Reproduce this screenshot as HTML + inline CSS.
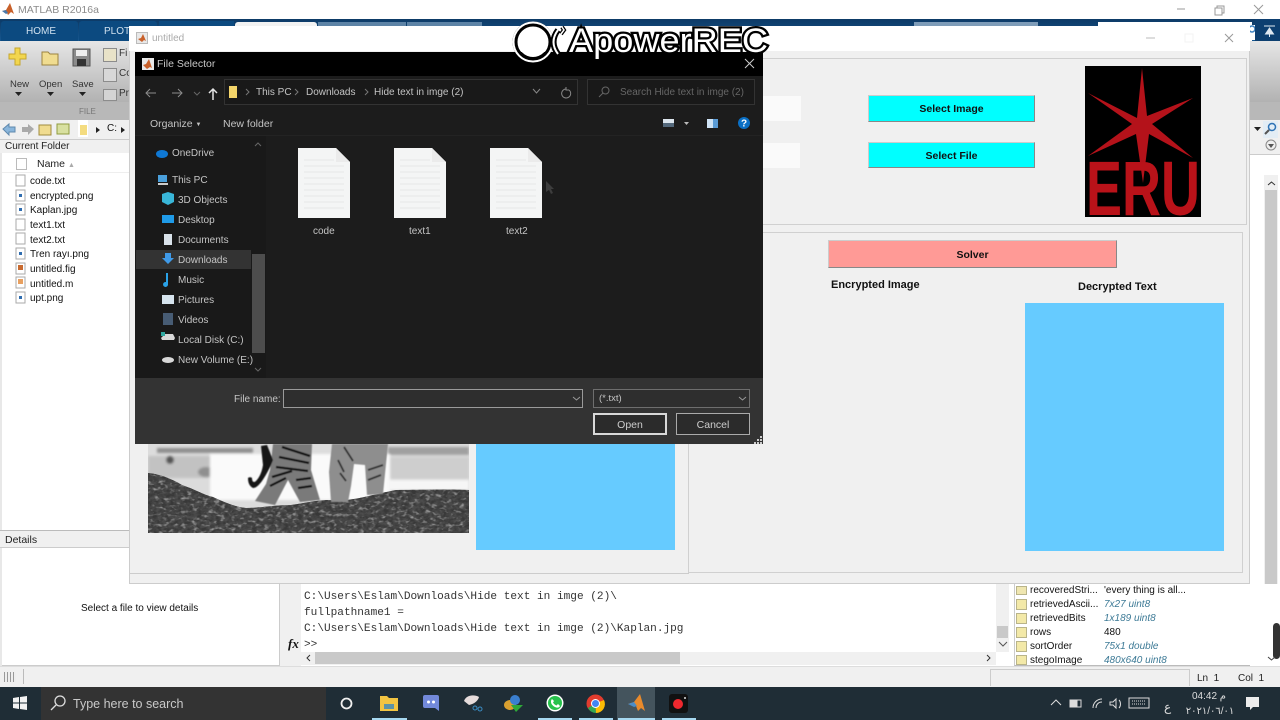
<!DOCTYPE html>
<html><head><meta charset="utf-8"><style>
html,body{margin:0;padding:0;width:1280px;height:720px;overflow:hidden;background:#fff}
body{position:relative;font-family:"Liberation Sans","Noto Sans CJK SC",sans-serif;font-size:10px;color:#111}
.a{position:absolute}
.t{position:absolute;white-space:nowrap;line-height:18px;margin-top:1px}
.n{color:#c4c4c4;font-size:10px}
.nv{margin-top:1px}
.mono{position:absolute;font-family:"Liberation Mono",monospace;font-size:11.1px;color:#333;white-space:nowrap;line-height:18px;left:304px;margin-top:1px}
svg{position:absolute;overflow:visible}
.btn{position:absolute;background:#0ff;border-bottom:1px solid #888;border-right:1px solid #888;border-top:1px solid #ccc;border-left:1px solid #ccc;box-sizing:border-box;text-align:center;font-weight:bold;font-size:10.5px;color:#111}
.wv{position:absolute;left:1030px;font-size:10px;color:#111;white-space:nowrap;line-height:16px}
.wt{position:absolute;left:1104px;font-size:10px;color:#3d7a96;font-style:italic;white-space:nowrap;line-height:16px}
.gi{position:absolute;left:1016px;width:11px;height:11px;background:#f3e9a8;border:1px solid #b9b48a;box-sizing:border-box}
</style></head><body>

<!-- MATLAB title bar -->
<div class="a" style="left:0;top:0;width:1280px;height:19px;background:#fff"></div>
<svg style="left:2px;top:3px" width="13" height="13" viewBox="0 0 13 13"><path d="M0 8l4-1 4-7 4 11-3-2-3 3-2-4z" fill="#c8602a"/><path d="M0 8l4-1 2 3-2 1z" fill="#4a78a8"/></svg>
<div class="t" style="left:18px;top:0px;color:#8c8c8c;font-size:10.5px">MATLAB R2016a</div>
<svg style="left:1175px;top:4px" width="100" height="12" viewBox="0 0 100 12" fill="none" stroke="#999"><path d="M2 5h8"/><path d="M40 4h7v7h-7zM42 4V2h7v7h-2"/><path d="M79 1l9 9M88 1l-9 9"/></svg>

<!-- Blue tab strip -->
<div class="a" style="left:0;top:19px;width:1280px;height:22px;background:linear-gradient(#0d3a66,#15568f)"></div>
<div class="a" style="left:1px;top:21px;width:77px;height:20px;background:#0c4a80;border-radius:3px 3px 0 0"></div>
<div class="t" style="left:26px;top:22px;color:#cfe0ee;font-size:10px">HOME</div>
<div class="a" style="left:79px;top:21px;width:78px;height:20px;background:#0c4a80;border-radius:3px 3px 0 0"></div>
<div class="t" style="left:104px;top:22px;color:#cfe0ee;font-size:10px">PLOTS</div>
<div class="a" style="left:159px;top:21px;width:75px;height:20px;background:#0c4a80"></div>
<div class="a" style="left:235px;top:22px;width:82px;height:19px;background:#f2f2f2;border-radius:3px 3px 0 0"></div>
<div class="a" style="left:318px;top:22px;width:88px;height:19px;background:#5d83a6"></div>
<div class="a" style="left:407px;top:22px;width:75px;height:19px;background:#5d83a6"></div>
<div class="a" style="left:914px;top:22px;width:124px;height:19px;background:#7e9cb8"></div>
<div class="a" style="left:1098px;top:22px;width:154px;height:19px;background:#fff"></div>
<svg style="left:1250px;top:25px" width="30" height="16" viewBox="0 0 30 16"><rect x="0" y="0" width="5" height="15" fill="#fff"/><circle cx="2" cy="4" r="3" fill="none" stroke="#3a80c0" stroke-width="1.5"/><rect x="5" y="-6" width="25" height="22" fill="#0d3f70"/><path d="M14 1h11M19.500 3l-4 6h8zM19.500 9v3" fill="#dfe8f0" stroke="#dfe8f0"/></svg>

<!-- Ribbon -->
<div class="a" style="left:0;top:41px;width:1280px;height:61px;background:linear-gradient(#e6e6e6,#b2b2b2)"></div>
<div class="a" style="left:0;top:102px;width:1280px;height:18px;background:#b8b8b8"></div>
<svg style="left:8px;top:47px" width="20" height="20" viewBox="0 0 20 20"><path d="M7 1h5v6h6v5h-6v6H7v-6H1V7h6z" fill="#f2d64f" stroke="#c5a62d"/></svg>
<svg style="left:41px;top:51px" width="18" height="15" viewBox="0 0 18 15"><path d="M1 1h6l2 2h8v11H1z" fill="#f0dc90" stroke="#9c8340"/></svg>
<svg style="left:72px;top:48px" width="20" height="19" viewBox="0 0 20 19"><rect x="1" y="1" width="17" height="17" fill="#8b8b8b" stroke="#555"/><rect x="4" y="2" width="11" height="6" fill="#eee"/><rect x="5" y="11" width="9" height="7" fill="#333"/></svg>
<div class="t" style="left:10px;top:75px;font-size:9.5px;color:#333">New</div>
<div class="t" style="left:39px;top:75px;font-size:9.5px;color:#333">Open</div>
<div class="t" style="left:72px;top:75px;font-size:9.5px;color:#333">Save</div>
<svg style="left:14px;top:92px" width="80" height="5" viewBox="0 0 80 5" fill="#222"><path d="M1 0h7l-3.500 4zM33 0h7l-3.500 4zM65 0h7l-3.500 4z"/></svg>
<div class="t" style="left:79px;top:102px;font-size:8px;color:#777">FILE</div>
<div class="a" style="left:103px;top:48px;width:12px;height:12px;background:#e8e2c8;border:1px solid #8c8c8c"></div>
<div class="a" style="left:103px;top:68px;width:12px;height:12px;background:#d8d8d8;border:1px solid #8c8c8c"></div>
<div class="a" style="left:103px;top:89px;width:12px;height:10px;background:#d4d4d4;border:1px solid #8c8c8c"></div>
<div class="t" style="left:119px;top:44px;color:#333">Fi</div>
<div class="t" style="left:119px;top:64px;color:#333">Co</div>
<div class="t" style="left:119px;top:84px;color:#333">Pr</div>

<!-- Path bar -->
<div class="a" style="left:0;top:120px;width:129px;height:19px;background:#f0f0f0"></div>
<svg style="left:2px;top:122px" width="124" height="15" viewBox="0 0 124 15"><path d="M1 7l6-5v3h6v5H7v3z" fill="#8ab6dc" stroke="#5f89ad"/><path d="M32 7l-6-5v3h-6v5h6v3z" fill="#aaa"/><rect x="37" y="3" width="12" height="10" fill="#f0dc90" stroke="#a08c40"/><rect x="55" y="2" width="12" height="10" fill="#d8e0a0" stroke="#909c40"/><rect x="76" y="-2" width="10" height="17" fill="#fff"/><rect x="78" y="3" width="7" height="10" fill="#f4dc80"/><path d="M94 5l4 3-4 3zM119 5l4 3-4 3z" fill="#222"/></svg>
<div class="t" style="left:107px;top:119px;font-size:10px">C:</div>
<div class="a" style="left:0;top:139px;width:129px;height:14px;background:#f0f0f0;border-top:1px solid #ccc"></div>
<div class="t" style="left:5px;top:137px;font-size:10px;color:#222">Current Folder</div>

<!-- Current folder -->
<div class="a" style="left:2px;top:153px;width:127px;height:377px;background:#fff"></div>
<div class="a" style="left:0;top:153px;width:2px;height:530px;background:#e8e8e8"></div>
<div class="a" style="left:16px;top:158px;width:9px;height:10px;border:1px solid #bbb;background:#fff"></div>
<div class="t" style="left:37px;top:154px;font-size:10.5px;color:#222">Name <span style="color:#aaa;font-size:7px">▲</span></div>
<div class="a" style="left:2px;top:172px;width:127px;height:1px;background:#eee"></div>
<div class="t" style="left:30px;top:172px;font-size:10px">code.txt</div>
<div class="t" style="left:30px;top:187px;font-size:10px">encrypted.png</div>
<div class="t" style="left:30px;top:201px;font-size:10px">Kaplan.jpg</div>
<div class="t" style="left:30px;top:216px;font-size:10px">text1.txt</div>
<div class="t" style="left:30px;top:231px;font-size:10px">text2.txt</div>
<div class="t" style="left:30px;top:245px;font-size:10px">Tren rayı.png</div>
<div class="t" style="left:30px;top:260px;font-size:10px">untitled.fig</div>
<div class="t" style="left:30px;top:275px;font-size:10px">untitled.m</div>
<div class="t" style="left:30px;top:289px;font-size:10px">upt.png</div>
<svg style="left:15px;top:175px" width="12" height="130" viewBox="0 0 12 130">
<g fill="#fff" stroke="#aaa"><rect x="1" y="0" width="9" height="11"/><rect x="1" y="15" width="9" height="11"/><rect x="1" y="29" width="9" height="11"/><rect x="1" y="44" width="9" height="11"/><rect x="1" y="58" width="9" height="11"/><rect x="1" y="73" width="9" height="11"/><rect x="1" y="88" width="9" height="11"/><rect x="1" y="102" width="9" height="11"/><rect x="1" y="117" width="9" height="11"/></g>
<g fill="#2f6db0"><rect x="4" y="19" width="3" height="3"/><rect x="4" y="33" width="3" height="3"/><rect x="4" y="77" width="3" height="3"/><rect x="4" y="121" width="3" height="3"/></g>
<rect x="3" y="90" width="5" height="5" fill="#c86a30"/><rect x="3" y="104" width="5" height="5" fill="#e8a060"/></svg>

<!-- Details -->
<div class="a" style="left:0;top:530px;width:129px;height:1px;background:#bbb"></div>
<div class="a" style="left:0;top:531px;width:129px;height:16px;background:#f0f0f0;border-bottom:1px solid #ccc"></div>
<div class="t" style="left:5px;top:530px;font-size:10.5px;color:#222">Details</div>
<div class="a" style="left:2px;top:548px;width:277px;height:117px;background:#fff;border-right:1px solid #ccc;border-bottom:1px solid #ccc"></div>
<div class="t" style="left:81px;top:599px;font-size:10px;color:#111">Select a file to view details</div>

<!-- Bottom gray band -->
<div class="a" style="left:0;top:666px;width:1280px;height:20px;background:#f0f0f0;border-top:1px solid #ddd"></div>
<div class="a" style="left:280px;top:584px;width:8px;height:82px;background:#f0f0f0"></div>
<div class="a" style="left:4px;top:672px;width:12px;height:10px;background:repeating-linear-gradient(90deg,#999 0 1px,#eee 1px 3px)"></div>
<div class="a" style="left:23px;top:669px;width:1px;height:15px;background:#bbb"></div>
<div class="a" style="left:990px;top:669px;width:200px;height:17px;border:1px solid #ccc;box-sizing:border-box;border-bottom:0"></div>
<div class="t" style="left:1197px;top:669px;font-size:10px;color:#222">Ln&nbsp; 1</div>
<div class="t" style="left:1238px;top:669px;font-size:10px;color:#222">Col&nbsp; 1</div>

<!-- Command window -->
<div class="a" style="left:287px;top:584px;width:726px;height:82px;background:#fff"></div>
<div class="a" style="left:287px;top:584px;width:14px;height:82px;background:#f0f0f0"></div>
<div class="mono" style="top:587px">C:\Users\Eslam\Downloads\Hide text in imge (2)\</div>
<div class="mono" style="top:603px">fullpathname1 =</div>
<div class="mono" style="top:619px">C:\Users\Eslam\Downloads\Hide text in imge (2)\Kaplan.jpg</div>
<div class="mono" style="top:635px">&gt;&gt;</div>
<div class="t" style="left:288px;top:634px;font-family:'Liberation Serif',serif;font-style:italic;font-weight:bold;font-size:13px">fx</div>
<div class="a" style="left:301px;top:652px;width:695px;height:13px;background:#f0f0f0"></div>
<div class="a" style="left:315px;top:652px;width:365px;height:12px;background:#c9c9c9"></div>
<svg style="left:304px;top:654px" width="690" height="9" viewBox="0 0 690 9" fill="none" stroke="#333"><path d="M6 1L3 4l3 3M683 1l3 3-3 3"/></svg>
<div class="a" style="left:996px;top:584px;width:13px;height:68px;background:#f0f0f0"></div>
<div class="a" style="left:997px;top:626px;width:11px;height:12px;background:#c9c9c9"></div>
<svg style="left:997px;top:640px" width="12" height="8" viewBox="0 0 12 8" fill="none" stroke="#555"><path d="M2 2l4 4 4-4"/></svg>

<!-- Workspace -->
<div class="a" style="left:1014px;top:584px;width:251px;height:82px;background:#fff;border-left:1px solid #ccc;border-bottom:1px solid #bbb;box-sizing:border-box"></div>
<div class="a" style="left:1016px;top:586px;width:11px;height:9px;background:#efe6b0;border:1px solid #b9b48a;box-sizing:border-box"></div>
<div class="gi" style="top:599px"></div><div class="gi" style="top:613px"></div><div class="gi" style="top:627px"></div><div class="gi" style="top:641px"></div><div class="gi" style="top:655px;height:10px"></div>
<div class="wv" style="top:583px">recoveredStri...</div><div class="wv" style="left:1104px;top:583px">'every thing is all...</div>
<div class="wv" style="top:597px">retrievedAscii...</div><div class="wt" style="top:597px">7x27 uint8</div>
<div class="wv" style="top:611px">retrievedBits</div><div class="wt" style="top:611px">1x189 uint8</div>
<div class="wv" style="top:625px">rows</div><div class="wv" style="left:1104px;top:625px">480</div>
<div class="wv" style="top:639px">sortOrder</div><div class="wt" style="top:639px">75x1 double</div>
<div class="wv" style="top:653px;height:12px;overflow:hidden">stegoImage</div><div class="wt" style="top:653px;height:12px;overflow:hidden">480x640 uint8</div>

<!-- Right strip -->
<div class="a" style="left:1250px;top:120px;width:30px;height:20px;background:#f0f0f0"></div>
<svg style="left:1250px;top:120px" width="30" height="20" viewBox="0 0 30 20"><path d="M4 7h7l-3.500 4z" fill="#222"/><rect x="13" y="1" width="15" height="17" fill="#e3edf5"/><circle cx="22" cy="7" r="3.500" fill="none" stroke="#2f73b5" stroke-width="1.500"/><path d="M19 10l-4 4" stroke="#555" stroke-width="2"/></svg>
<div class="a" style="left:1250px;top:140px;width:30px;height:14px;background:#f0f0f0;border-bottom:1px solid #ccc"></div>
<svg style="left:1265px;top:139px" width="12" height="12" viewBox="0 0 12 12"><circle cx="6" cy="6" r="5" fill="#eee" stroke="#888"/><path d="M3 5h6l-3 4z" fill="#555"/></svg>
<div class="a" style="left:1250px;top:155px;width:30px;height:511px;background:#fff"></div>
<div class="a" style="left:1264px;top:175px;width:14px;height:409px;background:#f0f0f0"></div>
<div class="a" style="left:1265px;top:190px;width:12px;height:394px;background:#c9c9c9"></div>
<svg style="left:1266px;top:180px" width="11" height="7" viewBox="0 0 11 7" fill="none" stroke="#333"><path d="M2 5l3.500-3L9 5"/></svg>
<div class="a" style="left:1273px;top:623px;width:7px;height:36px;background:#333;border-radius:4px"></div>
<svg style="left:1266px;top:655px" width="11" height="7" viewBox="0 0 11 7" fill="none" stroke="#444"><path d="M2 2l3.500 3L9 2"/></svg>

<!-- untitled window -->
<div class="a" style="left:129px;top:26px;width:1121px;height:558px;background:#f0f0f0;border-left:1px solid #ccc;border-right:1px solid #ccc;border-bottom:1px solid #ccc;box-sizing:border-box"></div>
<div class="a" style="left:129px;top:26px;width:1121px;height:25px;background:#fff"></div>
<div class="a" style="left:136px;top:32px;width:12px;height:12px;background:#e8e8e8;border:1px solid #bbb;box-sizing:border-box"></div>
<svg style="left:138px;top:34px" width="8" height="8" viewBox="0 0 8 8"><path d="M0 5l3-1 2-4 3 7-2-1-2 2z" fill="#c8602a"/></svg>
<div class="t" style="left:152px;top:29px;font-size:10px;color:#aaa">untitled</div>
<svg style="left:1146px;top:33px" width="90" height="12" viewBox="0 0 90 12" fill="none"><path d="M0 5h9" stroke="#bbb"/><rect x="39" y="1" width="8" height="8" stroke="#f3f3f3"/><path d="M79 1l8 8M87 1l-8 8" stroke="#999"/></svg>

<!-- top panel -->
<div class="a" style="left:763px;top:58px;width:484px;height:167px;border:1px solid #d0d0d0;border-left:0;box-sizing:border-box;background:#f0f0f0"></div>
<div class="a" style="left:763px;top:96px;width:38px;height:25px;background:#fafafa"></div>
<div class="a" style="left:763px;top:143px;width:37px;height:25px;background:#fafafa"></div>
<div class="btn" style="left:868px;top:95px;width:167px;height:27px;line-height:26px">Select Image</div>
<div class="btn" style="left:868px;top:142px;width:167px;height:26px;line-height:26px">Select File</div>

<!-- ERU logo -->
<svg style="left:1085px;top:66px" width="116" height="151" viewBox="0 0 116 151">
<rect width="116" height="151" fill="#000"/>
<path d="M57 2L62 50L108 32L67 58L108 92L64 68L58 117L51 68L3 90L47 58L3 27L52 52Z" fill="#b4121a"/>
<text x="1" y="149" textLength="114" lengthAdjust="spacingAndGlyphs" font-family="Liberation Sans,sans-serif" font-weight="bold" font-size="77" fill="#b91219">ERU</text>
</svg>

<!-- lower panels -->
<div class="a" style="left:688px;top:232px;width:555px;height:341px;border:1px solid #d0d0d0;box-sizing:border-box;background:#f0f0f0"></div>
<div class="a" style="left:129px;top:573px;width:560px;height:1px;background:#ccc"></div>
<div class="btn" style="left:828px;top:240px;width:289px;height:28px;line-height:28px;background:#ff9a96">Solver</div>
<div class="t" style="left:831px;top:275px;font-weight:bold;font-size:11px;color:#111">Encrypted Image</div>
<div class="t" style="left:1078px;top:277px;font-weight:bold;font-size:11px;color:#111">Decrypted Text</div>
<div class="a" style="left:1025px;top:303px;width:199px;height:248px;background:#66cbff"></div>
<div class="a" style="left:476px;top:440px;width:199px;height:110px;background:#66cbff"></div>

<!-- tiger image -->
<svg style="left:148px;top:444px;overflow:hidden" width="321" height="89" viewBox="0 0 321 89">
<defs>
<filter id="b1" x="-5%" y="-5%" width="110%" height="110%"><feGaussianBlur stdDeviation="1.200"/></filter>
<filter id="b2" x="-5%" y="-5%" width="110%" height="110%"><feGaussianBlur stdDeviation=".5"/></filter>
<filter id="nz" x="0" y="0" width="100%" height="100%"><feTurbulence type="fractalNoise" baseFrequency="0.22 0.32" numOctaves="2" seed="4"/><feColorMatrix values="0 0 0 0 0.04  0 0 0 0 0.04  0 0 0 0 0.04  2.4 0 0 0 -0.7"/></filter>
<filter id="nw" x="0" y="0" width="100%" height="100%"><feTurbulence type="fractalNoise" baseFrequency="0.18 0.3" numOctaves="2" seed="9"/><feColorMatrix values="0 0 0 0 .72  0 0 0 0 .72  0 0 0 0 .72  1.8 0 0 0 -.95"/></filter>
<clipPath id="gc"><path d="M0 29c12 1 24 6 34 12 12 4 22 10 31 12 11 5 22 10 33 11 14 0 28-3 45-3 14-2 27-5 39-5 20 2 36-4 66-10 24 0 48-1 73 0v43H0z"/></clipPath>
</defs>
<rect width="321" height="89" fill="#dcdcdc"/>
<g filter="url(#b1)">
<rect x="9" y="4" width="96" height="5" fill="#8f8f8f"/><rect x="240" y="3" width="81" height="8" fill="#a0a0a0"/>
<rect x="0" y="12" width="62" height="22" fill="#c2c2c2"/><circle cx="22" cy="16" r="4" fill="#555"/><ellipse cx="58" cy="28" rx="8" ry="5" fill="#8f8f8f"/>
<rect x="240" y="13" width="81" height="22" fill="#cecece"/>
<rect x="62" y="10" width="180" height="46" fill="#fafafa"/>
<rect x="240" y="36" width="81" height="10" fill="#f6f6f6"/>
</g>
<g clip-path="url(#gc)"><rect width="321" height="89" fill="#4c4c4c"/><rect width="321" height="89" filter="url(#nz)"/><rect width="321" height="89" filter="url(#nw)"/></g>
<g filter="url(#b2)">
<path d="M125 0h39l-1 26 9 30-20 2-12-22-13 25-20-4 11-17 4-14z" fill="#7a7a7a"/>
<path d="M184 0h56l-3 30-2 20-16 1-2-30-11-1-3 22-3 16-17 0-2-30z" fill="#8e8e8e"/>
<path d="M119 1l6 15c-3 8-7 15-11 21-3 4-6 7-9 7-4-2-5-6-5-10 1-1 3-1 4 0 0 4 2 5 4 3 4-4 6-10 7-16l-2-19z" fill="#151515"/>
<g fill="none" stroke="#0f0f0f" stroke-width="2.300"><path d="M134 3l28 9M131 13l30 6M128 23l32 4M124 33l20-6M122 42l16-8M148 36l15-2M150 44l14-2"/></g>
<g fill="none" stroke="#2a2a2a" stroke-width="1.800"><path d="M196 3l9 14M190 16l6 12M192 29l6 8M220 26l15-5M220 36l13-5"/></g>
</g>
</svg>

<!-- File Selector dialog -->
<div class="a" style="left:135px;top:52px;width:628px;height:392px;background:#1c1c1c"></div>
<div class="a" style="left:135px;top:52px;width:628px;height:24px;background:#000"></div>
<div class="a" style="left:142px;top:58px;width:12px;height:12px;background:#e8e8e8"></div>
<svg style="left:143px;top:59px" width="10" height="10" viewBox="0 0 10 10"><path d="M0 6l3-1 3-5 3 9-2-1-3 2z" fill="#c8602a"/></svg>
<div class="t" style="left:157px;top:54px;font-size:10.5px;color:#c8c8c8">File Selector</div>
<svg style="left:745px;top:59px" width="9" height="9" viewBox="0 0 9 9" stroke="#ccc"><path d="M0 0l9 9M9 0L0 9"/></svg>

<svg style="left:146px;top:87px" width="76" height="14" viewBox="0 0 76 14" fill="none"><path d="M0 6h10M4 2L0 6l4 4M26 6h10M32 2l4 4-4 4" stroke="#8c8c8c"/><path d="M48 5l3 3 3-3" stroke="#666"/><path d="M67 13V3M63 6l4-4 4 4" stroke="#e4e4e4" stroke-width="1.500"/></svg>
<div class="a" style="left:224px;top:79px;width:354px;height:26px;border:1px solid #333;box-sizing:border-box;background:#191919"></div>
<svg style="left:228px;top:86px" width="10" height="12" viewBox="0 0 10 12"><path d="M1 0h8v12H1z" fill="#f4d56a"/></svg>
<div class="t n" style="left:256px;top:83px">This PC</div>
<div class="t n" style="left:306px;top:83px">Downloads</div>
<div class="t n" style="left:374px;top:83px">Hide text in imge (2)</div>
<svg style="left:245px;top:88px" width="125" height="8" viewBox="0 0 125 8" fill="none" stroke="#777"><path d="M1 1l3 3-3 3M50 1l3 3-3 3M120 1l3 3-3 3"/></svg>
<svg style="left:532px;top:87px" width="40" height="12" viewBox="0 0 40 12" fill="none" stroke="#888"><path d="M1 2l3.500 4L8 2"/><path d="M37 3a4.500 4.500 0 1 1-3-1M34 0v3h3"/></svg>
<div class="a" style="left:587px;top:79px;width:168px;height:26px;border:1px solid #333;box-sizing:border-box;background:#191919"></div>
<svg style="left:598px;top:86px" width="12" height="12" viewBox="0 0 12 12" fill="none" stroke="#666"><circle cx="7.500" cy="4.500" r="3.500"/><path d="M5 7L1 11"/></svg>
<div class="t" style="left:620px;top:83px;font-size:10px;color:#666">Search Hide text in imge (2)</div>

<div class="t n" style="left:150px;top:114px;font-size:10.500px">Organize <span style="font-size:6px;vertical-align:1px">▼</span></div>
<div class="t n" style="left:223px;top:114px;font-size:10.500px">New folder</div>
<svg style="left:662px;top:116px" width="90" height="14" viewBox="0 0 90 14"><rect x="1" y="3" width="11" height="8" fill="#dde6ee"/><rect x="1" y="7" width="11" height="4" fill="#54697c"/><path d="M22 6h5l-2.500 3z" fill="#bbb"/><rect x="45" y="3" width="11" height="9" fill="#cfe3f5"/><rect x="51" y="3" width="5" height="9" fill="#5a9bd5"/><circle cx="82" cy="7" r="6" fill="#0a6fc4"/><text x="82" y="10.500" text-anchor="middle" font-family="Liberation Sans,sans-serif" font-size="10" font-weight="bold" fill="#fff">?</text></svg>
<div class="a" style="left:135px;top:135px;width:628px;height:1px;background:#232323"></div>

<!-- Nav pane -->
<div class="a" style="left:135px;top:136px;width:131px;height:242px;background:#191919"></div>
<div class="a" style="left:136px;top:250px;width:115px;height:19px;background:#333"></div>
<div class="a" style="left:252px;top:254px;width:13px;height:99px;background:#4d4d4d"></div>
<svg style="left:253px;top:140px" width="10" height="236" viewBox="0 0 10 236" fill="none" stroke="#666"><path d="M2 6l3-3 3 3M2 228l3 3 3-3"/></svg>
<div class="t n nv" style="left:172px;top:144px">OneDrive</div>
<div class="t n nv" style="left:172px;top:171px">This PC</div>
<div class="t n nv" style="left:178px;top:191px">3D Objects</div>
<div class="t n nv" style="left:178px;top:211px">Desktop</div>
<div class="t n nv" style="left:178px;top:231px">Documents</div>
<div class="t n nv" style="left:178px;top:251px">Downloads</div>
<div class="t n nv" style="left:178px;top:271px">Music</div>
<div class="t n nv" style="left:178px;top:291px">Pictures</div>
<div class="t n nv" style="left:178px;top:311px">Videos</div>
<div class="t n nv" style="left:178px;top:331px">Local Disk (C:)</div>
<div class="t n nv" style="left:178px;top:351px">New Volume (E:)</div>
<svg style="left:155px;top:146px" width="22" height="220" viewBox="0 0 22 220">
<ellipse cx="7" cy="8" rx="6" ry="4" fill="#0f78d4"/>
<rect x="3" y="29" width="9" height="7" fill="#4aa0dc"/><path d="M3 38h10" stroke="#ccc" stroke-width="2"/>
<path d="M7 48l6-2 6 2v8l-6 3-6-3z" fill="#39b6d8"/>
<rect x="7" y="69" width="12" height="8" fill="#1f9be8"/>
<rect x="9" y="88" width="8" height="11" fill="#d9e2ea"/>
<path d="M10 107h6v5h3l-6 6-6-6h3z" fill="#3f9ae8"/>
<path d="M13 127v11a2.500 2.500 0 1 1-2-2v-9h2z" fill="#2aa2e8"/>
<rect x="7" y="149" width="12" height="9" fill="#d6e4ee"/>
<rect x="8" y="167" width="10" height="12" fill="#475c74"/>
<path d="M6 192l4-4h8l2 4-1 2H7z" fill="#d8d8d8"/><rect x="6" y="186" width="4" height="4" fill="#2fa8a0"/>
<ellipse cx="13" cy="214" rx="6" ry="3" fill="#d8d8d8"/>
</svg>

<!-- File icons -->
<svg style="left:298px;top:148px" width="244" height="70" viewBox="0 0 244 70">
<defs>
<g id="f"><path d="M0 0h38l14 14v56H0z" fill="#f4f5f5"/><path d="M38 0l14 14H38z" fill="#ebebeb"/><path d="M6 12h30M6 18h40M6 24h40M6 30h40M6 36h40M6 42h40M6 48h40M6 54h40M6 60h40" stroke="#e6e8e8"/></g>
</defs>
<use href="#f" x="0"/><use href="#f" x="96"/><use href="#f" x="192"/>
</svg>
<div class="t n nv" style="left:313px;top:222px">code</div>
<div class="t n nv" style="left:409px;top:222px">text1</div>
<div class="t n nv" style="left:506px;top:222px">text2</div>
<svg style="left:546px;top:181px" width="9" height="13" viewBox="0 0 9 13"><path d="M0 0l8 8H5l2 4-2 1-2-4-3 2z" fill="#3d3d3d"/></svg>

<!-- Dialog bottom -->
<div class="a" style="left:135px;top:378px;width:628px;height:66px;background:#333"></div>
<div class="t n" style="left:234px;top:390px">File name:</div>
<div class="a" style="left:283px;top:389px;width:300px;height:19px;border:1px solid #9a9a9a;box-sizing:border-box;background:#2e2e2e"></div>
<div class="a" style="left:593px;top:389px;width:157px;height:19px;border:1px solid #6e6e6e;box-sizing:border-box;background:#2e2e2e"></div>
<div class="t n" style="left:599px;top:389px;font-size:9.500px">(*.txt)</div>
<svg style="left:572px;top:396px" width="176" height="6" viewBox="0 0 176 6" fill="none" stroke="#999"><path d="M1 1l3.500 3L8 1M167 1l3.500 3 3.500-3"/></svg>
<div class="a" style="left:593px;top:413px;width:74px;height:22px;border:2px solid #d8d8d8;box-sizing:border-box;background:#2b2b2b;color:#ccc;text-align:center;line-height:20px;font-size:10.500px">Open</div>
<div class="a" style="left:676px;top:413px;width:74px;height:22px;border:1px solid #aaa;box-sizing:border-box;background:#2b2b2b;color:#ccc;text-align:center;line-height:22px;font-size:10.500px">Cancel</div>
<svg style="left:754px;top:436px" width="8" height="8" viewBox="0 0 8 8" fill="#ccc"><rect x="6" y="0" width="2" height="2"/><rect x="3" y="3" width="2" height="2"/><rect x="6" y="3" width="2" height="2"/><rect x="0" y="6" width="2" height="2"/><rect x="3" y="6" width="2" height="2"/><rect x="6" y="6" width="2" height="2"/></svg>

<!-- Watermark -->
<svg style="left:512px;top:22px" width="258" height="42" viewBox="0 0 258 42">
<circle cx="21" cy="20" r="18" fill="none" stroke="#000" stroke-width="5"/><circle cx="21" cy="20" r="19.500" fill="none" stroke="#fff" stroke-width="2"/>
<circle cx="21" cy="20" r="15" fill="#fff"/>
<path d="M46 8c-6 8-6 16 0 24" fill="none" stroke="#000" stroke-width="6"/><path d="M46 8c-6 8-6 16 0 24" fill="none" stroke="#fff" stroke-width="2"/>
<path d="M50 5l2 3-3 4" fill="none" stroke="#000" stroke-width="4"/><path d="M50 5l2 3-3 4" fill="none" stroke="#fff" stroke-width="1.500"/>
<text x="57" y="30" font-family="Liberation Sans,sans-serif" font-size="34" fill="#fff" stroke="#000" stroke-width="4.500" paint-order="stroke" textLength="199" lengthAdjust="spacingAndGlyphs">ApowerREC</text>
</svg>

<!-- Taskbar -->
<div class="a" style="left:0;top:687px;width:1280px;height:33px;background:#1f2d36"></div>
<svg style="left:13px;top:696px" width="14" height="14" viewBox="0 0 14 14" fill="#f2f2f2"><path d="M0 2l6-1v5.500H0zM7 1l7-1v6.500H7zM0 7.500h6V13l-6-1zM7 7.500h7V14l-7-1z"/></svg>
<div class="a" style="left:41px;top:687px;width:285px;height:33px;background:#333"></div>
<svg style="left:50px;top:695px" width="16" height="16" viewBox="0 0 16 16" fill="none" stroke="#ddd" stroke-width="1.300"><circle cx="10" cy="6" r="5"/><path d="M6 10l-5 5"/></svg>
<div class="t" style="left:73px;top:695px;font-size:12.5px;line-height:16px;color:#c9c9c9">Type here to search</div>
<svg style="left:340px;top:697px" width="13" height="13" viewBox="0 0 13 13"><circle cx="6.500" cy="6.500" r="5" fill="none" stroke="#f0f0f0" stroke-width="1.800"/></svg>
<svg style="left:380px;top:695px" width="18" height="16" viewBox="0 0 18 16"><path d="M0 1h7l2 2h9v13H0z" fill="#f2c442"/><rect x="4" y="9" width="10" height="5" fill="#5c93a8"/></svg>
<div class="a" style="left:372px;top:718px;width:35px;height:2px;background:#a6d8f0"></div>
<svg style="left:422px;top:694px" width="18" height="18" viewBox="0 0 18 18"><path d="M3 1h12a2 2 0 0 1 2 2v14l-4-3H3a2 2 0 0 1-2-2V3a2 2 0 0 1 2-2z" fill="#7289da"/><circle cx="6.500" cy="8" r="1.500" fill="#fff"/><circle cx="11.500" cy="8" r="1.500" fill="#fff"/></svg>
<svg style="left:463px;top:694px" width="19" height="19" viewBox="0 0 19 19"><path d="M1 7c2-6 10-7 15-4-1 4-5 7-10 8z" fill="#e6dcdc"/><circle cx="12" cy="14" r="2" fill="none" stroke="#3a8cc4"/><circle cx="17" cy="15" r="2" fill="none" stroke="#3a8cc4"/></svg>
<svg style="left:503px;top:694px" width="20" height="19" viewBox="0 0 20 19"><ellipse cx="7" cy="11" rx="6" ry="5" fill="#d9a030"/><circle cx="12" cy="6" r="5" fill="#3a7fd0"/><path d="M8 11h12l-7 7z" fill="#2fa838"/></svg>
<svg style="left:546px;top:694px" width="18" height="18" viewBox="0 0 18 18"><circle cx="9" cy="9" r="8.500" fill="#fff"/><circle cx="9" cy="9" r="7" fill="#27c24c"/><path d="M6 5l2 2-1 1.500c.8 1.500 2 2.500 3.500 3L12 10l2 2c-1 2-3 2-5 1-2-1-4-3-4-5 0-1 0-2 1-3z" fill="#fff"/></svg>
<svg style="left:586px;top:694px" width="19" height="19" viewBox="0 0 19 19"><circle cx="9.500" cy="9.500" r="9" fill="#e23c2e"/><path d="M9.500 9.500L2 14a9 9 0 0 0 8 5z" fill="#34a853"/><path d="M9.500 9.500L18 6a9 9 0 0 1-8 13z" fill="#fbbc05"/><circle cx="9.500" cy="9.500" r="4.500" fill="#fff"/><circle cx="9.500" cy="9.500" r="3.500" fill="#4285f4"/></svg>
<div class="a" style="left:617px;top:687px;width:38px;height:33px;background:#44545d"></div>
<svg style="left:628px;top:694px" width="18" height="18" viewBox="0 0 18 18"><path d="M0 10l6-2 6-8 5 17-4-3-3 3-2-5z" fill="#e88a2c"/><path d="M0 10l6-2 3 4-3 1z" fill="#4a8cc8"/></svg>
<svg style="left:669px;top:694px" width="19" height="19" viewBox="0 0 19 19"><rect width="19" height="19" rx="3" fill="#111"/><circle cx="9" cy="10" r="5" fill="#f0282e"/><circle cx="16" cy="4" r="1" fill="#ddd"/></svg>
<div class="a" style="left:538px;top:718px;width:34px;height:2px;background:#a6d8f0"></div>
<div class="a" style="left:579px;top:718px;width:34px;height:2px;background:#a6d8f0"></div>
<div class="a" style="left:618px;top:718px;width:37px;height:2px;background:#a6d8f0"></div>
<div class="a" style="left:662px;top:718px;width:34px;height:2px;background:#a6d8f0"></div>

<!-- tray -->
<svg style="left:1049px;top:697px" width="105" height="14" viewBox="0 0 105 14" fill="none" stroke="#dcdcdc"><path d="M2 8l5-5 5 5"/><rect x="21" y="3" width="11" height="7"/><rect x="22" y="4" width="6" height="5" fill="#dcdcdc"/><path d="M44 11c0-5 4-9 9-9M47 11c0-3 2-6 6-6"/><path d="M61 5h3l3-3v9l-3-3h-3zM70 3c2 2 2 6 0 8"/><rect x="80" y="1" width="20" height="10"/><path d="M83 4h14M83 7h14" stroke-dasharray="1 1"/></svg>
<div class="t" style="left:1164px;top:697px;font-size:12px;color:#ddd">ع</div>
<div class="t" style="left:1181px;top:687px;font-size:10px;color:#ddd;width:56px;text-align:center">04:42 م</div>
<div class="t" style="left:1178px;top:702px;font-size:10px;color:#ddd;width:64px;text-align:center">٢٠٢١/٠٦/٠١</div>
<svg style="left:1245px;top:697px" width="16" height="14" viewBox="0 0 16 14"><path d="M1 0h13v10H8l-3 3v-3H1z" fill="#ececec"/></svg>
</body></html>
